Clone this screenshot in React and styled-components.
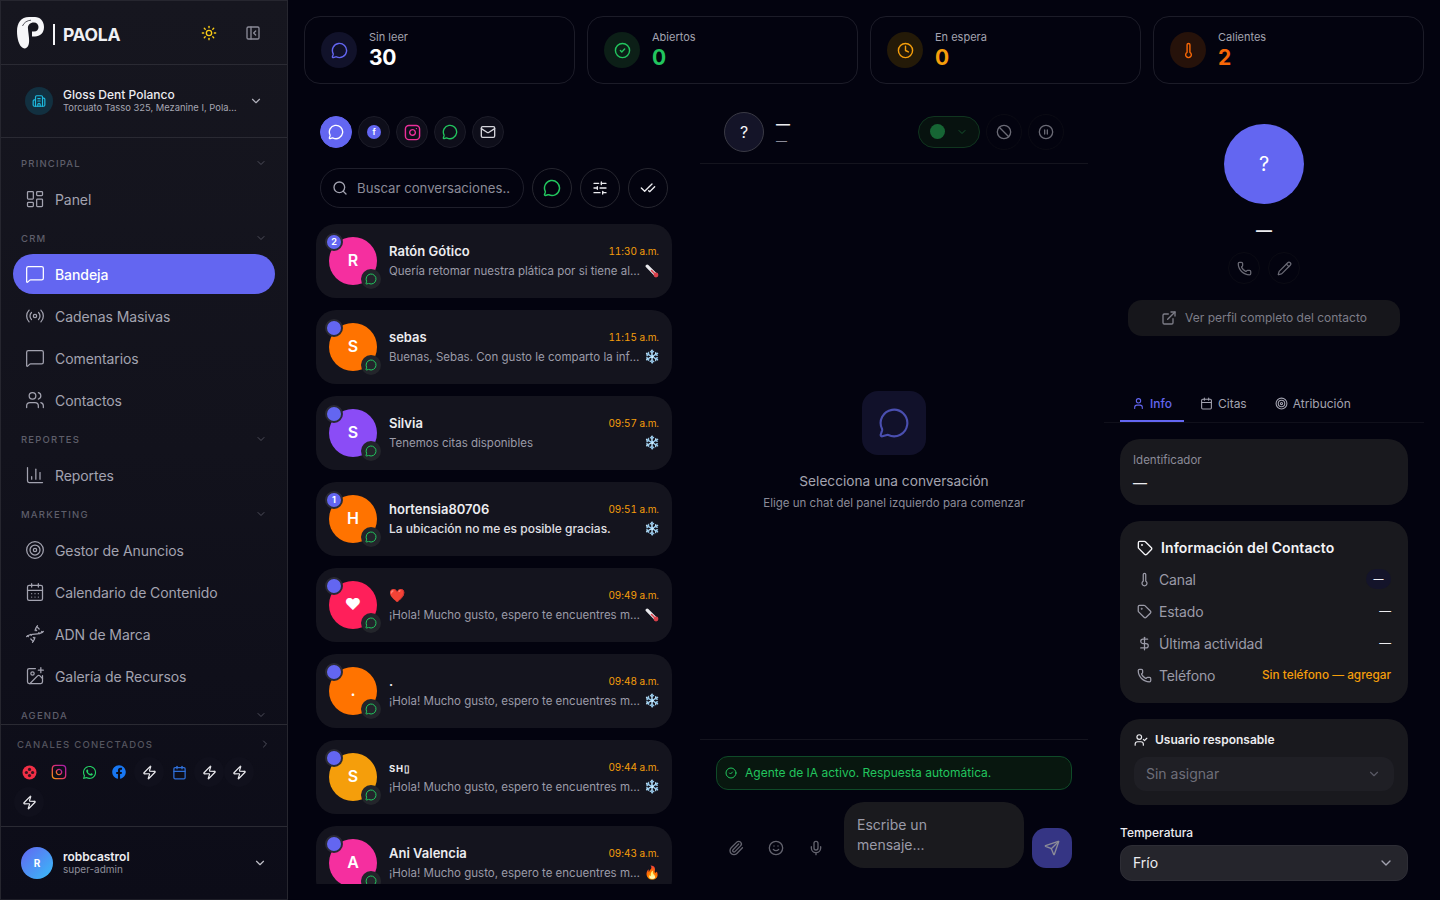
import React from 'react';
import styled, { createGlobalStyle } from 'styled-components';
import {
  Sun, PanelLeftClose, Building2, ChevronDown, ChevronRight, LayoutDashboard, MessageSquare, Radio, Users, ChartColumn,
  Target, CalendarDays, Dna, ImagePlus, Zap, Calendar, MessageCircle, CircleCheck, Clock, Thermometer, Mail, Instagram,
  Search, SlidersHorizontal, CheckCheck, Ban, CirclePause, Paperclip, Smile, Mic, Send, Phone, Pencil, ExternalLink, User,
  Tag, DollarSign, UserCheck,
} from 'lucide-react';
import { FaWhatsapp, FaFacebook } from 'react-icons/fa';

const Global = createGlobalStyle`
  html, body { margin: 0; padding: 0; height: 100%; background: #03030f; overflow: hidden; }
  body { font-family: Inter, "Noto Sans", sans-serif; color: #f4f4f7; }
  * { box-sizing: border-box; }
  svg { flex: none; }
`;

const Page = styled.div`display: flex; width: 1440px; height: 900px; overflow: hidden; background: #03030f;`;
const Sidebar = styled.aside`
  width: 288px; height: 900px; flex: none; display: flex; flex-direction: column;
  border: 1px solid #26262f; border-bottom-color: #1e1e28;
  background: linear-gradient(180deg, #16161f 0%, #12121c 50%, #0c0c18 100%);
`;
const Brand = styled.div`
  height: 64px; flex: none; display: flex; align-items: center; padding: 2px 16px 0; border-bottom: 1px solid #2a2a33;
`;
const LogoBox = styled.div`display: flex; margin-top: -2px;`;
const BrandName = styled.div`
  margin: 2px 0 0 9px; padding-left: 8px; height: 21px; border-left: 2px solid #f4f4f7; font-size: 17.5px; line-height: 21px;
  font-weight: 700; letter-spacing: -0.3px; color: #f0f0f3; flex: 1;
`;
const HeadIcon = styled.span`
  display: flex; width: 16px; justify-content: center; color: ${p => p.$c}; margin-top: -2px; margin-left: ${p => p.$ml}px; margin-right: ${p => p.$mr || 0}px;
`;
const Location = styled.div`
  height: 73px; flex: none; display: flex; align-items: center; padding: 0 24px; border-bottom: 1px solid #2a2a33;
`;
const LocIcon = styled.div`
  width: 28px; height: 28px; border-radius: 50%; background: #123040; color: #1ebbe0; display: flex; align-items: center; justify-content: center; flex: none;
`;
const LocText = styled.div`margin-left: 10px; flex: 1; min-width: 0;`;
const LocName = styled.div`font-size: 12px; line-height: 14px; font-weight: 500; color: #ececf0;`;
const LocSub = styled.div`font-size: 9.4px; line-height: 12px; color: #a6a6b2; white-space: nowrap; overflow: hidden; text-overflow: ellipsis; width: 175px;`;
const Nav = styled.nav`flex: 1; min-height: 0; overflow: hidden; padding: 0 12px;`;
const SecLabel = styled.div`
  height: 32px; display: flex; align-items: center; justify-content: space-between; padding: 0 8px; margin-top: ${p => p.$mt || 3}px;
  font-size: 9.5px; font-weight: 500; letter-spacing: 1.2px; color: #5e5e6a;
`;
const NavItem = styled.div`
  height: 40px; margin-bottom: 2px; border-radius: 20px; display: flex; align-items: center; gap: 10px; padding: 0 12px;
  font-size: 14px; letter-spacing: -0.08px; background: ${p => (p.$active ? '#6366f1' : 'transparent')}; color: ${p => (p.$active ? '#fff' : '#a3a3b0')};
  font-weight: ${p => (p.$active ? 500 : 400)};
`;
const Channels = styled.div`
  height: 103px; flex: none; border-top: 1px solid #2a2a33; border-bottom: 1px solid #2a2a33; padding: 13px 16px 0;
`;
const ChanHead = styled.div`
  display: flex; justify-content: space-between; align-items: center; font-size: 9.5px; font-weight: 500; letter-spacing: 1.25px; color: #55555f; height: 12px;
`;
const ChanGrid = styled.div`display: flex; flex-wrap: wrap; margin: 7px 0 0 -3px;`;
const Chan = styled.div`width: 30px; height: 30px; display: flex; align-items: center; justify-content: center; border-radius: 50%; color: ${p => p.$c || '#ececf0'}; background: ${p => (p.$dim ? '#10101c' : 'transparent')};`;
const UserRow = styled.div`height: 72px; flex: none; display: flex; align-items: center; padding: 0 20px;`;
const UserAv = styled.div`
  width: 32px; height: 32px; border-radius: 50%; background: linear-gradient(135deg, #6366f1, #38bdf8); display: flex; align-items: center; justify-content: center;
  font-size: 10px; font-weight: 700; color: #fff; flex: none;
`;
const UserText = styled.div`margin-left: 10px; flex: 1; padding-bottom: 2px;`;
const UserName = styled.div`font-size: 12px; line-height: 14px; font-weight: 600; color: #ececf0;`;
const UserSub = styled.div`font-size: 10px; line-height: 11px; color: #8f8f9b;`;

const Main = styled.main`flex: 1; min-width: 0; display: flex; flex-direction: column; padding: 16px 16px 0;`;
const Stats = styled.div`display: grid; grid-template-columns: repeat(4, 1fr); gap: 12px; height: 68px; flex: none;`;
const Stat = styled.div`
  border: 1px solid #1c1c28; border-radius: 16px; display: flex; align-items: center; padding: 0 16px; gap: 12px;
`;
const StatIcon = styled.div`
  width: 36px; height: 36px; border-radius: 50%; background: ${p => p.$bg}; color: ${p => p.$c}; display: flex; align-items: center; justify-content: center; flex: none;
`;
const StatText = styled.div`margin-top: 2px;`;
const StatLabel = styled.div`font-size: 11px; line-height: 14px; color: #a3a3b0;`;
const StatValue = styled.div`font-size: 21px; line-height: 28px; font-weight: 700; letter-spacing: -0.4px; color: ${p => p.$c};`;
const Columns = styled.div`flex: 1; min-height: 0; display: flex; padding-top: 16px; gap: 16px;`;

const ListCol = styled.section`width: 380px; flex: none; height: 784px; display: flex; flex-direction: column; padding-left: 12px; padding-right: 12px; position: relative;`;
const Filters = styled.div`display: flex; gap: 6px; padding: 16px 0 0 4px; flex: none;`;
const FilterBtn = styled.div`
  width: 32px; height: 32px; border-radius: 50%; display: flex; align-items: center; justify-content: center;
  background: ${p => (p.$active ? '#6366f1' : '#0e0e1a')}; border: 1px solid ${p => (p.$active ? '#6366f1' : '#1c1c28')}; color: ${p => p.$c || '#fff'};
`;
const FbDot = styled.div`width: 14px; height: 14px; border-radius: 50%; background: #6366f1; color: #fff; font-size: 8px; font-weight: 700; display: flex; align-items: center; justify-content: center;`;
const SearchRow = styled.div`display: flex; gap: 8px; padding: 20px 0 0 4px; flex: none;`;
const SearchBox = styled.div`
  width: 204px; height: 40px; border: 1px solid #1f1f2b; border-radius: 20px; display: flex; align-items: center; padding: 0 11px; gap: 9px;
  font-size: 13.2px; color: #8b8b98; white-space: nowrap; overflow: hidden;
`;
const RoundBtn = styled.div`
  width: 40px; height: 40px; border-radius: 50%; border: 1px solid #26262f; display: flex; align-items: center; justify-content: center; color: ${p => p.$c || '#ececf0'};
`;
const Cards = styled.div`flex: 1; min-height: 0; overflow: hidden; padding-top: 16px; display: flex; flex-direction: column; gap: 12px;`;
const Card = styled.div`
  height: 74px; flex: none; width: 356px; border-radius: 20px; background: #14141e; display: flex; align-items: center; padding: 0 13px;
`;
const AvWrap = styled.div`position: relative; width: 48px; height: 48px; flex: none;`;
const Av = styled.div`
  width: 48px; height: 48px; border-radius: 50%; background: ${p => p.$bg}; color: #fff; display: flex; align-items: center; justify-content: center; font-size: 16px; font-weight: 600; padding-bottom: 2px;
`;
const Unread = styled.div`
  position: absolute; left: -4px; top: -4px; width: 18px; height: 18px; border-radius: 50%; background: #6366f1; border: 2px solid #2a2a33;
  font-size: 9px; line-height: 14px; text-align: center; font-weight: 700; color: #fff;
`;
const ChanBadge = styled.div`
  position: absolute; right: -4px; bottom: -4px; width: 20px; height: 20px; border-radius: 50%; background: #23252b; color: #22c55e; display: flex; align-items: center; justify-content: center;
`;
const CardBody = styled.div`margin: -1px 0 0 12px; flex: 1; min-width: 0;`;
const CardTop = styled.div`display: flex; justify-content: space-between; align-items: center; height: 18px; margin-bottom: 2px;`;
const CardName = styled.div`font-size: 13px; font-weight: 600; color: #ececf0;`;
const SmallCaps = styled.span`font-size: 9.5px; letter-spacing: .8px; font-weight: 700;`;
const CardTime = styled.div`font-size: 10px; letter-spacing: -0.05px; color: #f59e0b; font-variant-numeric: tabular-nums;`;
const CardBottom = styled.div`display: flex; justify-content: space-between; align-items: center; height: 18px;`;
const CardMsg = styled.div`
  font-size: ${p => (p.$strong ? 12 : 11.5)}px; color: ${p => (p.$strong ? '#e0e0e6' : '#9b9ba8')}; font-weight: ${p => (p.$strong ? 500 : 400)};
  white-space: nowrap; overflow: hidden; text-overflow: ellipsis; width: 252px;
`;
const Emoji = styled.span`
  width: 14px; height: 14px; flex: none; display: flex; align-items: center; justify-content: center; overflow: visible;
  font-size: 13px; line-height: 14px; font-family: "Noto Color Emoji", "Apple Color Emoji", "Segoe UI Emoji", sans-serif;
`;

const ChatCol = styled.section`width: 388px; flex: none; height: 784px; display: flex; flex-direction: column;`;
const ChatHead = styled.div`height: 64px; flex: none; display: flex; align-items: center; padding: 0 24px; border-bottom: 1px solid #14141e; `;
const QAv = styled.div`
  width: 40px; height: 40px; border-radius: 50%; background: #141428; border: 1px solid #3a3a45; display: flex; align-items: center; justify-content: center; font-size: 16px; color: #f4f4f7;
`;
const HeadText = styled.div`margin-left: 12px; flex: 1;`;
const HeadDash = styled.div`font-size: 14px; line-height: 16px; font-weight: 600; color: #ececf0;`;
const HeadSub = styled.div`font-size: 11px; line-height: 14px; color: #8b8b98; margin-top: 2px;`;
const Toggle = styled.div`
  width: 62px; height: 32px; border-radius: 16px; border: 1px solid #10351f; background: #07120f; display: flex; align-items: center; padding: 0 11px; justify-content: space-between; color: #14532d;
`;
const ToggleDot = styled.div`width: 15px; height: 15px; border-radius: 50%; background: #166534;`;
const GhostBtn = styled.div`
  width: 36px; height: 36px; border-radius: 50%; margin-left: ${p => p.$ml}px; border: 1px solid #0b0b14; color: #6a6a75; display: flex; align-items: center; justify-content: center;
`;
const Empty = styled.div`flex: 1; display: flex; flex-direction: column; align-items: center; justify-content: center; border-bottom: 1px solid #14141e;`;
const EmptyIcon = styled.div`width: 64px; height: 64px; border-radius: 16px; background: #11112a; color: #4a4fb0; display: flex; align-items: center; justify-content: center;`;
const EmptyTitle = styled.div`margin-top: 17px; font-size: 13.7px; line-height: 18px; color: #a3a3b0;`;
const EmptySub = styled.div`margin-top: 4px; font-size: 11.5px; line-height: 18px; color: #8b8b98;`;
const Composer = styled.div`height: 144px; flex: none; padding: 16px;`;
const AgentBar = styled.div`
  height: 34px; border-radius: 12px; border: 1px solid #0f4a28; background: #08170f; color: #22c55e; font-size: 12px; display: flex; align-items: center; gap: 8px; padding: 0 8px 1px;
`;
const InputRow = styled.div`display: flex; align-items: flex-end; margin-top: 12px;`;
const InIcon = styled.div`width: 40px; height: 40px; display: flex; align-items: center; justify-content: center; color: #63636e;`;
const InBox = styled.div`
  width: 180px; height: 66px; margin-left: 8px; border-radius: 20px; background: #1a1a1e; padding: 13px 50px 0 13px; font-size: 14px; line-height: 20px; color: #9b9ba8;
`;
const SendBtn = styled.div`
  width: 40px; height: 40px; margin-left: 8px; border-radius: 14px; background: #353584; color: #8b8b98; display: flex; align-items: center; justify-content: center;
`;

const InfoCol = styled.section`width: 320px; flex: none; height: 784px; overflow: hidden; display: flex; flex-direction: column;`;
const Profile = styled.div`display: flex; flex-direction: column; align-items: center; padding-top: 24px; flex: none;`;
const BigAv = styled.div`width: 80px; height: 80px; border-radius: 50%; background: #6366f1; color: #fff; font-size: 20px; display: flex; align-items: center; justify-content: center;`;
const BigDash = styled.div`margin-top: 14px; font-size: 16px; line-height: 24px; font-weight: 600; color: #ececf0;`;
const ProfileBtns = styled.div`display: flex; gap: 8px; margin-top: 10px;`;
const SmallGhost = styled.div`width: 32px; height: 32px; border-radius: 50%; border: 1px solid #0b0b14; color: #6a6a75; display: flex; align-items: center; justify-content: center;`;
const FullBtn = styled.div`
  margin-top: 16px; width: 272px; height: 36px; border-radius: 14px; background: #16161b; color: #7d7d88; font-size: 12px; display: flex; align-items: center; justify-content: center; gap: 8px; padding-bottom: 1px;
`;
const Tabs = styled.div`margin-top: 52px; height: 35px; flex: none; display: flex; gap: 4px; padding: 0 16px; border-bottom: 1px solid #10101b;`;
const Tab = styled.div`
  height: 34px; display: flex; align-items: center; gap: 5px; padding: 0 12px 1px; font-size: 12px; color: ${p => (p.$active ? '#6366f1' : '#a3a3b0')};
  border-bottom: 2px solid ${p => (p.$active ? '#6366f1' : 'transparent')}; font-weight: ${p => (p.$active ? 500 : 400)};
`;
const InfoBody = styled.div`padding: 16px 16px 0; display: flex; flex-direction: column; gap: 16px;`;
const Panel = styled.div`border-radius: 20px; background: #19191e; padding: ${p => p.$pad};`;
const IdLabel = styled.div`font-size: 11.5px; line-height: 16px; color: #8b8b98;`;
const IdValue = styled.div`font-size: 14px; line-height: 18px; margin-top: 6px; color: #ececf0;`;
const PanelTitle = styled.div`display: flex; align-items: center; gap: 8px; font-size: 14px; line-height: 20px; font-weight: 600; letter-spacing: 0.1px; color: #f4f4f7; margin-bottom: 5px;`;
const InfoRow = styled.div`height: 32px; display: flex; align-items: center; color: #9b9ba8; font-size: 14px; letter-spacing: -0.15px;`;
const InfoIcon = styled.span`width: 14px; margin-right: 8px; display: flex; justify-content: center;`;
const InfoVal = styled.span`margin-left: auto; color: ${p => p.$c || '#ececf0'}; font-size: 11.8px; font-weight: 500; letter-spacing: 0;`;
const Pill = styled.span`margin-left: auto; width: 25px; height: 20px; border-radius: 10px; background: #14142a; color: #ececf0; font-size: 10px; font-weight: 500; display: flex; align-items: center; justify-content: center;`;
const UserTitle = styled.div`display: flex; align-items: center; gap: 7px; font-size: 12px; line-height: 16px; font-weight: 600; color: #ececf0;`;
const SelectBox = styled.div`
  margin-top: 9px; height: 34px; border-radius: 12px; background: #1f1f25; color: #6e6e79; font-size: 14px; display: flex; align-items: center; justify-content: space-between; padding: 0 13px 1px 12px;
`;
const TempLabel = styled.div`font-size: 12px; line-height: 16px; font-weight: 500; color: #ececf0; margin-top: 4px;`;
const TempSelect = styled.div`
  margin-top: 4px; height: 36px; border-radius: 12px; background: #25252c; border: 1px solid #2d2d35; color: #ececf0; font-size: 14px; display: flex; align-items: center; justify-content: space-between; padding: 0 13px 1px 12px;
`;

const Logo = () => (
  <svg width="27" height="32" viewBox="0 0 27 32" fill="#f6f6f8">
    <path d="M0 14 C0 6 4 0 12 0 L18 0 C23 0 27 4 27 10 C27 16 23 19.5 18 19.5 L15 19.5 L15 14.5 L17 14.5 C20 14.5 21.5 12.5 21.5 10 C21.5 7.5 19.5 5.5 17 5.5 C13 5.5 10.5 8 11 12 C11.5 18 13 24 11.5 28 C10.5 31 8 32 6 31 C2 29 0 22 0 14 Z" />
    <path d="M5.5 9 C7 5.5 10 3.5 14 3.2" fill="none" stroke="#16161f" strokeWidth="0.7" />
  </svg>
);

const TwilioMark = () => (
  <svg width="15" height="15" viewBox="0 0 15 15">
    <circle cx="7.5" cy="7.5" r="7" fill="#f22f46" />
    <circle cx="7.5" cy="4.4" r="1.6" fill="#3a1420" />
    <circle cx="4.4" cy="7.5" r="1.6" fill="#3a1420" />
    <circle cx="10.6" cy="7.5" r="1.6" fill="#3a1420" />
    <circle cx="7.5" cy="10.6" r="1.6" fill="#3a1420" />
  </svg>
);

const IgGradient = () => (
  <svg width="0" height="0" style={{ position: 'absolute' }}>
    <defs>
      <linearGradient id="igGrad" x1="0" y1="1" x2="1" y2="0">
        <stop offset="0" stopColor="#f59e0b" />
        <stop offset="0.5" stopColor="#e1306c" />
        <stop offset="1" stopColor="#a21caf" />
      </linearGradient>
    </defs>
  </svg>
);

const ThermoEmoji = () => (
  <svg width="14" height="14" viewBox="0 0 14 14">
    <path d="M2.2 2.2 L10 10" stroke="#e8e8ec" strokeWidth="3.2" strokeLinecap="round" />
    <path d="M6.5 6.5 L10.5 10.5" stroke="#d9404a" strokeWidth="1.6" strokeLinecap="round" />
    <circle cx="11" cy="11" r="2.4" fill="#d9404a" />
  </svg>
);

const Section = ({ label, mt }) => (
  <SecLabel $mt={mt}>{label}<ChevronDown size={12} color="#4e4e5a" /></SecLabel>
);
const Item = ({ icon: I, label, active }) => (
  <NavItem $active={active}><I size={20} strokeWidth={1.5} />{label}</NavItem>
);

const thermo = <ThermoEmoji />;
const chats = [
  { n: 'Ratón Gótico', c: '#f52f9f', i: 'R', t: '11:30 a.m.', m: 'Quería retomar nuestra plática por si tiene alguna duda', e: thermo, u: '2' },
  { n: 'sebas', c: '#ff7300', i: 'S', t: '11:15 a.m.', m: 'Buenas, Sebas. Con gusto le comparto la información', e: '❄️' },
  { n: 'Silvia', c: '#8b4cf6', i: 'S', t: '09:57 a.m.', m: 'Tenemos citas disponibles', e: '❄️' },
  { n: 'hortensia80706', c: '#ff7300', i: 'H', t: '09:51 a.m.', m: 'La ubicación no me es posible gracias.', e: '❄️', u: '1', s: true },
  { n: '❤️', c: '#ff1f5a', i: '❤', t: '09:49 a.m.', m: '¡Hola! Mucho gusto, espero te encuentres muy bien', e: thermo },
  { n: '.', c: '#ff7300', i: '.', t: '09:48 a.m.', m: '¡Hola! Mucho gusto, espero te encuentres muy bien', e: '❄️' },
  { n: <SmallCaps>SH▯</SmallCaps>, c: '#f59e0b', i: 'S', t: '09:44 a.m.', m: '¡Hola! Mucho gusto, espero te encuentres muy bien', e: '❄️' },
  { n: 'Ani Valencia', c: '#f52f9f', i: 'A', t: '09:43 a.m.', m: '¡Hola! Mucho gusto, espero te encuentres muy bien', e: '🔥' },
];

const stats = [
  { l: 'Sin leer', v: '30', I: MessageCircle, bg: '#11122a', c: '#6366f1', vc: '#fff' },
  { l: 'Abiertos', v: '0', I: CircleCheck, bg: '#0c1f17', c: '#22c55e', vc: '#22c55e' },
  { l: 'En espera', v: '0', I: Clock, bg: '#241a08', c: '#f59e0b', vc: '#f59e0b' },
  { l: 'Calientes', v: '2', I: Thermometer, bg: '#26120a', c: '#f76707', vc: '#f76707' },
];

export default function App() {
  return (
    <Page>
      <Global />
      <IgGradient />
      <Sidebar>
        <Brand>
          <LogoBox><Logo /></LogoBox>
          <BrandName>PAOLA</BrandName>
          <HeadIcon $c="#facc15" $ml={0}><Sun size={16} /></HeadIcon>
          <HeadIcon $c="#8b8b98" $ml={28} $mr={10}><PanelLeftClose size={16} /></HeadIcon>
        </Brand>
        <Location>
          <LocIcon><Building2 size={14} /></LocIcon>
          <LocText>
            <LocName>Gloss Dent Polanco</LocName>
            <LocSub>Torcuato Tasso 325, Mezanine I, Polanco, CDMX</LocSub>
          </LocText>
          <ChevronDown size={14} color="#b0b0bb" />
        </Location>
        <Nav>
          <Section label="PRINCIPAL" mt={9} />
          <Item icon={LayoutDashboard} label="Panel" />
          <Section label="CRM" />
          <Item icon={MessageSquare} label="Bandeja" active />
          <Item icon={Radio} label="Cadenas Masivas" />
          <Item icon={MessageSquare} label="Comentarios" />
          <Item icon={Users} label="Contactos" />
          <Section label="REPORTES" />
          <Item icon={ChartColumn} label="Reportes" />
          <Section label="MARKETING" />
          <Item icon={Target} label="Gestor de Anuncios" />
          <Item icon={CalendarDays} label="Calendario de Contenido" />
          <Item icon={Dna} label="ADN de Marca" />
          <Item icon={ImagePlus} label="Galería de Recursos" />
          <Section label="AGENDA" />
        </Nav>
        <Channels>
          <ChanHead>CANALES CONECTADOS<ChevronRight size={12} color="#4e4e5a" /></ChanHead>
          <ChanGrid>
            <Chan><TwilioMark /></Chan>
            <Chan><Instagram size={16} stroke="url(#igGrad)" /></Chan>
            <Chan $c="#25d366"><FaWhatsapp size={15} /></Chan>
            <Chan $c="#1877f2"><FaFacebook size={14} /></Chan>
            <Chan $dim><Zap size={15} /></Chan>
            <Chan $c="#2f6fd8"><Calendar size={15} /></Chan>
            <Chan $dim><Zap size={15} /></Chan>
            <Chan $dim><Zap size={15} /></Chan>
            <Chan $dim><Zap size={15} /></Chan>
          </ChanGrid>
        </Channels>
        <UserRow>
          <UserAv>R</UserAv>
          <UserText>
            <UserName>robbcastrol</UserName>
            <UserSub>super-admin</UserSub>
          </UserText>
          <ChevronDown size={14} color="#c0c0c8" />
        </UserRow>
      </Sidebar>

      <Main>
        <Stats>
          {stats.map(({ l, v, I, bg, c, vc }) => (
            <Stat key={l}>
              <StatIcon $bg={bg} $c={c}><I size={17} /></StatIcon>
              <StatText>
                <StatLabel>{l}</StatLabel>
                <StatValue $c={vc}>{v}</StatValue>
              </StatText>
            </Stat>
          ))}
        </Stats>
        <Columns>
          <ListCol>
            <Filters>
              <FilterBtn $active><MessageCircle size={16} /></FilterBtn>
              <FilterBtn><FbDot>f</FbDot></FilterBtn>
              <FilterBtn $c="#ec2f9a"><Instagram size={17} /></FilterBtn>
              <FilterBtn $c="#22c55e"><MessageCircle size={16} /></FilterBtn>
              <FilterBtn $c="#d4d4da"><Mail size={16} /></FilterBtn>
            </Filters>
            <SearchRow>
              <SearchBox><Search size={16} color="#a3a3b0" />Buscar conversaciones..</SearchBox>
              <RoundBtn $c="#22c55e"><MessageCircle size={18} /></RoundBtn>
              <RoundBtn><SlidersHorizontal size={16} /></RoundBtn>
              <RoundBtn><CheckCheck size={16} /></RoundBtn>
            </SearchRow>
            <Cards>
              {chats.map((c, i) => (
                <Card key={i}>
                  <AvWrap>
                    <Av $bg={c.c}>{c.i}</Av>
                    <Unread>{c.u}</Unread>
                    <ChanBadge><MessageCircle size={12} /></ChanBadge>
                  </AvWrap>
                  <CardBody>
                    <CardTop>
                      <CardName>{c.n}</CardName>
                      <CardTime>{c.t}</CardTime>
                    </CardTop>
                    <CardBottom>
                      <CardMsg $strong={c.s}>{c.m}</CardMsg>
                      <Emoji>{c.e}</Emoji>
                    </CardBottom>
                  </CardBody>
                </Card>
              ))}
            </Cards>
          </ListCol>

          <ChatCol>
            <ChatHead>
              <QAv>?</QAv>
              <HeadText>
                <HeadDash>—</HeadDash>
                <HeadSub>—</HeadSub>
              </HeadText>
              <Toggle><ToggleDot /><ChevronDown size={12} /></Toggle>
              <GhostBtn $ml={6}><Ban size={16} /></GhostBtn>
              <GhostBtn $ml={6}><CirclePause size={16} /></GhostBtn>
            </ChatHead>
            <Empty>
              <EmptyIcon><MessageCircle size={32} strokeWidth={1.6} /></EmptyIcon>
              <EmptyTitle>Selecciona una conversación</EmptyTitle>
              <EmptySub>Elige un chat del panel izquierdo para comenzar</EmptySub>
            </Empty>
            <Composer>
              <AgentBar><CircleCheck size={12} />Agente de IA activo. Respuesta automática.</AgentBar>
              <InputRow>
                <InIcon><Paperclip size={16} /></InIcon>
                <InIcon><Smile size={16} /></InIcon>
                <InIcon><Mic size={16} /></InIcon>
                <InBox>Escribe un mensaje...</InBox>
                <SendBtn><Send size={16} /></SendBtn>
              </InputRow>
            </Composer>
          </ChatCol>

          <InfoCol>
            <Profile>
              <BigAv>?</BigAv>
              <BigDash>—</BigDash>
              <ProfileBtns>
                <SmallGhost><Phone size={15} /></SmallGhost>
                <SmallGhost><Pencil size={15} /></SmallGhost>
              </ProfileBtns>
              <FullBtn><ExternalLink size={16} />Ver perfil completo del contacto</FullBtn>
            </Profile>
            <Tabs>
              <Tab $active><User size={13} />Info</Tab>
              <Tab><Calendar size={13} />Citas</Tab>
              <Tab><Target size={13} />Atribución</Tab>
            </Tabs>
            <InfoBody>
              <Panel $pad="13px">
                <IdLabel>Identificador</IdLabel>
                <IdValue>—</IdValue>
              </Panel>
              <Panel $pad="17px 17px 12px">
                <PanelTitle><Tag size={16} />Información del Contacto</PanelTitle>
                <InfoRow><InfoIcon><Thermometer size={15} /></InfoIcon>Canal<Pill>—</Pill></InfoRow>
                <InfoRow><InfoIcon><Tag size={15} /></InfoIcon>Estado<InfoVal>—</InfoVal></InfoRow>
                <InfoRow><InfoIcon><DollarSign size={15} /></InfoIcon>Última actividad<InfoVal>—</InfoVal></InfoRow>
                <InfoRow><InfoIcon><Phone size={15} /></InfoIcon>Teléfono<InfoVal $c="#f59e0b">Sin teléfono — agregar</InfoVal></InfoRow>
              </Panel>
              <Panel $pad="13px 14px 14px">
                <UserTitle><UserCheck size={14} />Usuario responsable</UserTitle>
                <SelectBox>Sin asignar<ChevronDown size={14} color="#5a5a65" /></SelectBox>
              </Panel>
              <div>
                <TempLabel>Temperatura</TempLabel>
                <TempSelect>Frío<ChevronDown size={16} color="#a3a3b0" /></TempSelect>
              </div>
            </InfoBody>
          </InfoCol>
        </Columns>
      </Main>
    </Page>
  );
}
